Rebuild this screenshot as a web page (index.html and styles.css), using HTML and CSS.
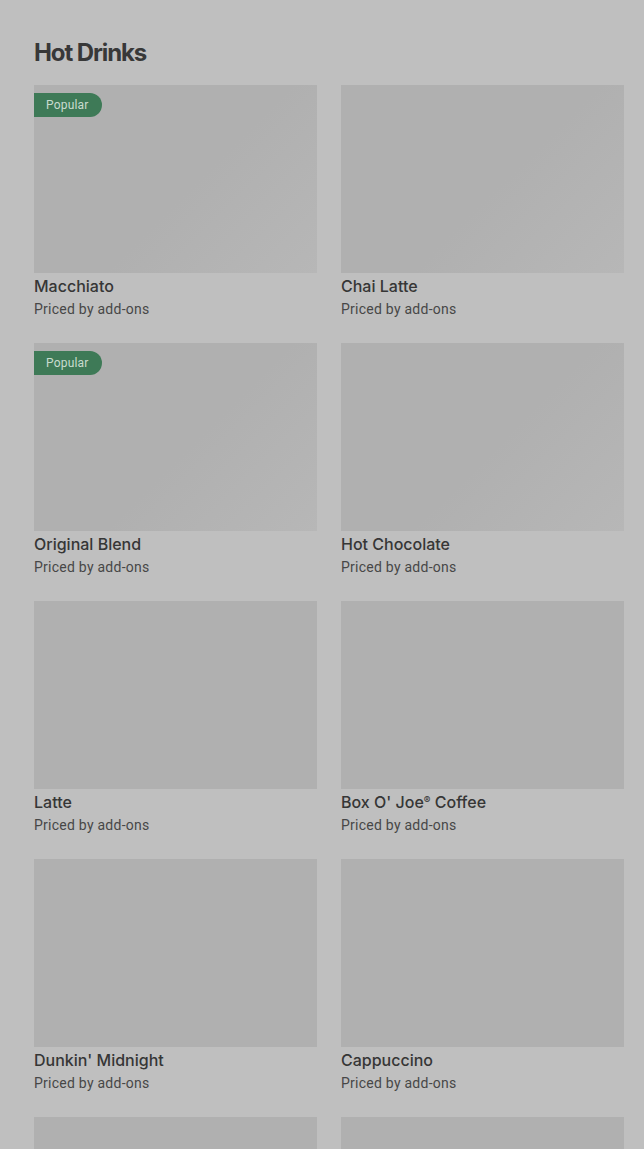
FILE: index.html
```html
<html>
<head>
    <title>Hot Drinks</title>
    <link rel="stylesheet" href="styles.css">
</head>
<body>
    <div class="page">
        <h2 class="section-title">Hot Drinks</h2>
        <div class="grid">
            <div class="item">
                <div class="thumb shimmer"><span class="badge">Popular</span></div>
                <div class="name">Macchiato</div>
                <div class="price">Priced by add-ons</div>
            </div>
            <div class="item">
                <div class="thumb shimmer"></div>
                <div class="name">Chai Latte</div>
                <div class="price">Priced by add-ons</div>
            </div>
            <div class="item">
                <div class="thumb shimmer"><span class="badge">Popular</span></div>
                <div class="name">Original Blend</div>
                <div class="price">Priced by add-ons</div>
            </div>
            <div class="item">
                <div class="thumb shimmer"></div>
                <div class="name">Hot Chocolate</div>
                <div class="price">Priced by add-ons</div>
            </div>
            <div class="item">
                <div class="thumb"></div>
                <div class="name">Latte</div>
                <div class="price">Priced by add-ons</div>
            </div>
            <div class="item">
                <div class="thumb"></div>
                <div class="name">Box O' Joe<span class="reg">®</span> Coffee</div>
                <div class="price">Priced by add-ons</div>
            </div>
            <div class="item">
                <div class="thumb"></div>
                <div class="name">Dunkin' Midnight</div>
                <div class="price">Priced by add-ons</div>
            </div>
            <div class="item">
                <div class="thumb"></div>
                <div class="name">Cappuccino</div>
                <div class="price">Priced by add-ons</div>
            </div>
            <div class="item">
                <div class="thumb"></div>
            </div>
            <div class="item">
                <div class="thumb"></div>
            </div>
        </div>
    </div>
</body>
</html>
```

FILE: styles.css
```css
body {
    margin: 0;
    background-color: #bfbfbf;
    font-family: Inter, "Noto Sans", sans-serif;
    color: #333333;
    overflow: hidden;
}
.page {
    padding: 37px 20px 0 34px;
}
.section-title {
    margin: 0 0 16px 0;
    font-size: 24px;
    line-height: 32px;
    font-weight: 700;
    letter-spacing: -1.1px;
    color: #383838;
}
.grid {
    display: grid;
    grid-template-columns: 1fr 1fr;
    column-gap: 24px;
    row-gap: 24px;
}
.thumb {
    position: relative;
    height: 188px;
    background-color: #b0b0b0;
}
.shimmer {
    background: linear-gradient(135deg, #b0b0b0 55%, #b7b7b7 100%);
}
.badge {
    position: absolute;
    top: 8px;
    left: 0;
    height: 24px;
    line-height: 24px;
    padding: 0 13px 0 12px;
    font-family: Roboto, sans-serif;
    font-size: 12px;
    letter-spacing: 0.2px;
    color: #c9dccf;
    background-color: #3e7a57;
    border-radius: 0 12px 12px 0;
}
.name {
    margin-top: 3px;
    font-size: 16px;
    line-height: 20px;
    font-weight: 500;
    color: #363636;
}
.reg {
    font-size: 10px;
    line-height: 0;
    vertical-align: 4px;
}
.price {
    margin-top: 3px;
    font-family: Roboto, sans-serif;
    font-size: 14px;
    line-height: 20px;
    letter-spacing: 0.25px;
    color: #474747;
}
```
